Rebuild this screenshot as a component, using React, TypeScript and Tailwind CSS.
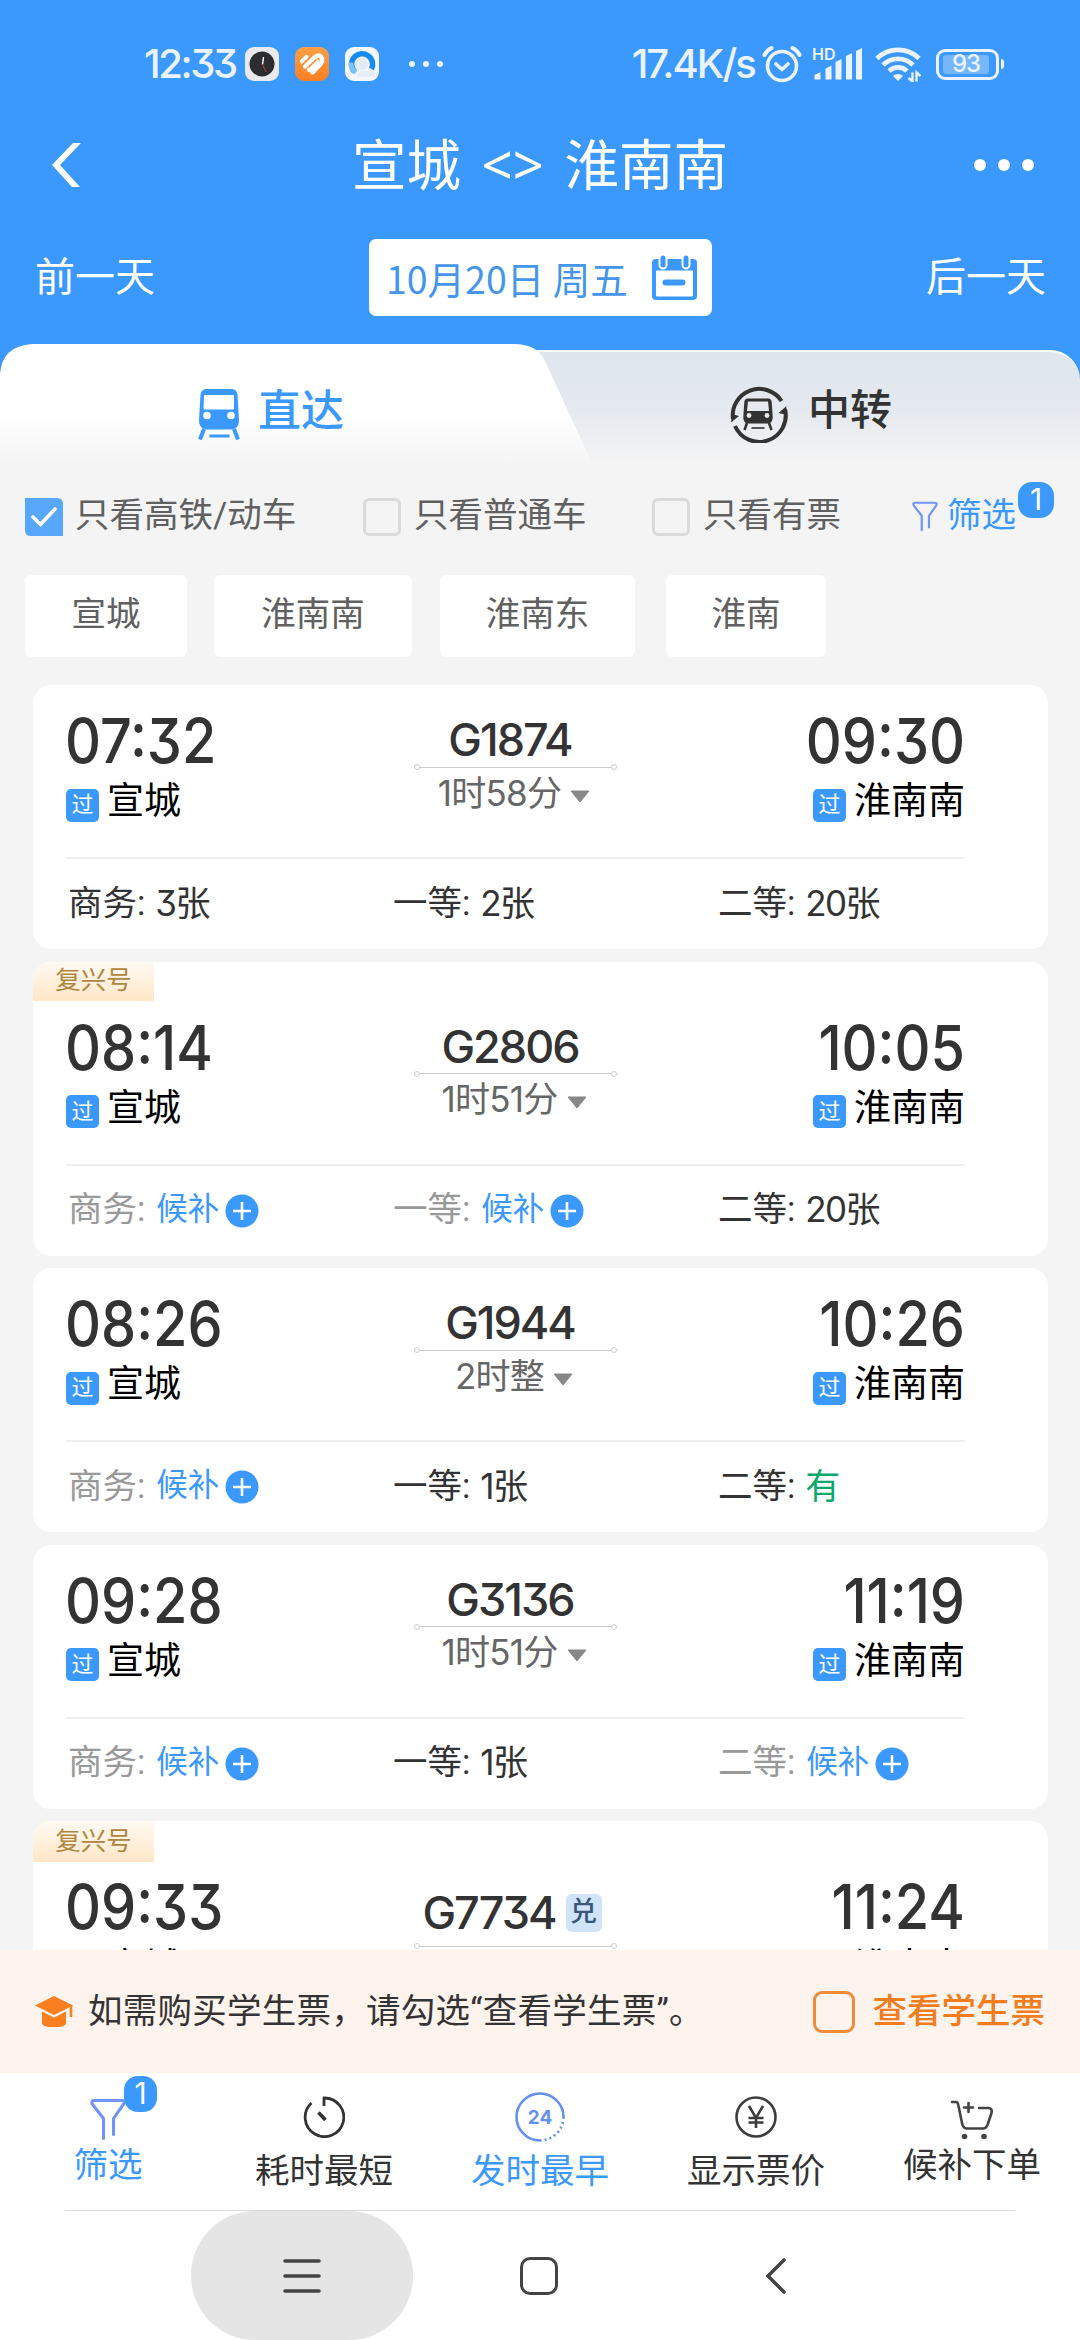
import clsx from "clsx";
import { ReactNode } from "react";

type TSeat = {
  label: string;
  // number of tickets left, "有" when plenty, null when only the waiting list is open
  left: string | null;
};

type TTrain = {
  number: string;
  depart: string;
  arrive: string;
  duration?: string;
  fuxing?: boolean;
  redeem?: boolean;
  seats: TSeat[];
};

const trains: TTrain[] = [
  {
    number: "G1874",
    depart: "07:32",
    arrive: "09:30",
    duration: "1时58分",
    seats: [
      { label: "商务", left: "3张" },
      { label: "一等", left: "2张" },
      { label: "二等", left: "20张" },
    ],
  },
  {
    number: "G2806",
    depart: "08:14",
    arrive: "10:05",
    duration: "1时51分",
    fuxing: true,
    seats: [
      { label: "商务", left: null },
      { label: "一等", left: null },
      { label: "二等", left: "20张" },
    ],
  },
  {
    number: "G1944",
    depart: "08:26",
    arrive: "10:26",
    duration: "2时整",
    seats: [
      { label: "商务", left: null },
      { label: "一等", left: "1张" },
      { label: "二等", left: "有" },
    ],
  },
  {
    number: "G3136",
    depart: "09:28",
    arrive: "11:19",
    duration: "1时51分",
    seats: [
      { label: "商务", left: null },
      { label: "一等", left: "1张" },
      { label: "二等", left: null },
    ],
  },
  {
    number: "G7734",
    depart: "09:33",
    arrive: "11:24",
    fuxing: true,
    redeem: true,
    seats: [],
  },
];

const StatusBar = () => (
  <div className="flex h-[128px] items-center pl-[144px] pr-[76px] text-[#eaf3ff]">
    <span className="w-[101px] font-['Inter','Noto_Sans_CJK_SC',sans-serif] text-[40px] leading-none font-medium tracking-[-2.4px] [font-feature-settings:'cv09']">
      12:33
    </span>
    <svg className="h-[34px] w-[34px]" viewBox="0 0 34 34">
      <rect width="34" height="34" rx="9" fill="#e9eaeb" />
      <circle cx="17" cy="17" r="12.5" fill="#2d2d2f" />
      <path d="M17.5 17.5 18.5 10" stroke="#fff" strokeWidth="1.4" />
      <path d="M17.5 17.5 21 25" stroke="#a8423a" strokeWidth="1" />
    </svg>
    <svg className="ml-4 h-[34px] w-[34px]" viewBox="0 0 34 34">
      <defs>
        <linearGradient id="fit" x1="0" y1="0" x2="0" y2="1">
          <stop offset="0" stopColor="#ff9f45" />
          <stop offset="1" stopColor="#f98022" />
        </linearGradient>
      </defs>
      <rect width="34" height="34" rx="9" fill="url(#fit)" />
      <path
        d="M7 14.500 11.500 10M10 19.500l10-9.500q4-3 6 0M17.500 25.500l8-8.500q3-4 .500-7M14 23l8-8.500"
        fill="none"
        stroke="#fff"
        strokeWidth="4.400"
        strokeLinecap="round"
      />
      <path d="m7.500 17.500 9.500-9.500M13.500 20.500l8-8" stroke="#fb8c31" strokeWidth="1.400" />
    </svg>
    <svg className="ml-4 h-[34px] w-[34px]" viewBox="0 0 34 34">
      <rect width="34" height="34" rx="9" fill="#f4f8fd" />
      <path d="M9.500 24.500A10.500 10.500 0 1 1 26.500 22" fill="none" stroke="#188cf0" strokeWidth="5.500" />
      <path d="M6 15.500a11 11 0 0 0 5 10" fill="none" stroke="#7cc2f8" strokeWidth="5" />
      <circle cx="16.500" cy="17" r="6.500" fill="#e3ebf8" />
      <path d="M11 30c2-5 6-7 11-6 4-2 8 0 8 6z" fill="#e6eef8" />
    </svg>
    <div className="ml-[30px] flex gap-2">
      <i className="size-[6px] rounded-full bg-[#eaf3ff]" />
      <i className="size-[6px] rounded-full bg-[#eaf3ff]" />
      <i className="size-[6px] rounded-full bg-[#eaf3ff]" />
    </div>
    <span className="ml-auto font-['Inter',sans-serif] text-[40px] leading-none font-medium tracking-[-1.9px]">
      17.4K/s
    </span>
    <svg className="ml-[7px] h-[38px] w-[40px]" viewBox="0 0 40 38" fill="none" stroke="currentColor">
      <circle cx="20" cy="21" r="14.500" strokeWidth="3.600" />
      <path d="m14 19 6 5.500 6-5.500" strokeWidth="3.600" strokeLinecap="round" strokeLinejoin="round" />
      <path d="M2.500 10C4 6.500 6.500 4.500 9.500 3M37.500 10C36 6.500 33.500 4.500 30.500 3" strokeWidth="4" strokeLinecap="round" />
    </svg>
    <svg className="ml-[10px] h-[38px] w-[50px] overflow-visible" viewBox="0 0 50 38" fill="currentColor">
      <text x="0" y="15" fontSize="16" fontWeight="600" fontFamily="Inter">
        HD
      </text>
      <path d="M2.500 34.500v-4.500l6-3v7.500zM13.500 34.500v-11l6-3v14zM23.500 34.500V17l6-3v20.500zM34 34.500V11l6-3v26.500zM44 34.500V6l6-3v31.500z" />
    </svg>
    <svg className="ml-[13px] h-[36px] w-[46px]" viewBox="0 0 46 36" fill="none" stroke="currentColor">
      <path d="M2 12.500a30 30 0 0 1 42 0M8 19a21.500 21.500 0 0 1 30 0M14 25a13 13 0 0 1 18 0" strokeWidth="4.800" />
      <path d="m18 30 5 5 5-5a7 7 0 0 0-10 0z" fill="currentColor" strokeWidth="0" />
      <path d="M37.500 26.500v9l-4-3.500M41.500 35.500v-9l4 3.500" strokeWidth="2.400" />
    </svg>
    <div className="ml-[15px] flex h-[31px] w-[63px] items-center rounded-[9px] border-3 border-[#eaf3ff] px-1">
      <div className="flex h-[19px] w-[46px] items-center justify-center rounded-[3px] bg-[#75b6fd] font-['Inter',sans-serif] text-[24px] leading-none font-medium tracking-[-1px]">
        93
      </div>
    </div>
    <i className="ml-[2px] h-[10px] w-[3px] rounded-r bg-[#eaf3ff]" />
  </div>
);

const TrainIcon = () => (
  <svg className="h-[52px] w-[42px]" viewBox="0 0 42 52">
    <path
      d="M9 0h24c4 0 6 2 6.500 6L41 31c0 6-3 9.500-8 9.500H9C4 40.500 1 37 1 31L2.500 6C3 2 5 0 9 0z"
      fill="#3b98fc"
    />
    <path d="M7 7h28v12.500H6.500z" fill="#fff" stroke="#fff" strokeWidth="2" strokeLinejoin="round" />
    <circle cx="9" cy="26.500" r="3.800" fill="#fff" />
    <circle cx="33" cy="26.500" r="3.800" fill="#fff" />
    <path d="M6 40 2 50.500M36 40l4 10.500" stroke="#3b98fc" strokeWidth="4" />
    <path d="M11.500 47h20" stroke="#3b98fc" strokeWidth="3" />
  </svg>
);

const TransferIcon = () => (
  <svg className="h-[58px] w-[58px]" viewBox="0 0 58 58">
    <path d="M3 34A26.500 26.500 0 0 1 51.500 16" fill="none" stroke="#333" strokeWidth="4" />
    <path d="M55 24A26.500 26.500 0 0 1 5 41" fill="none" stroke="#333" strokeWidth="4" />
    <path d="M1 37.500 2 29l7 2zM56.500 21l-8 7 6.500 1.500z" fill="#333" />
    <path
      d="M18 13.500h20c2.500 0 3.500 1.500 3.700 3.500l1 15c0 4-1.700 6.500-5 6.500H18.300c-3.300 0-5-2.500-5-6.500l1-15c.200-2 1.200-3.500 3.700-3.500z"
      fill="#333"
    />
    <path d="M18 16.500h20l1 9.500H17z" fill="#e6eaef" />
    <circle cx="19" cy="30.500" r="2.400" fill="#e6eaef" />
    <circle cx="37" cy="30.500" r="2.400" fill="#e6eaef" />
    <path d="m17 38-2.500 7M39 38l2.500 7" stroke="#333" strokeWidth="2.600" />
    <path d="M21.500 43h13" stroke="#555" strokeWidth="2" />
  </svg>
);

const Funnel = ({ className }: { className: string }) => (
  <svg className={className} viewBox="0 0 36 42" fill="none" stroke="#6f93f8" strokeWidth="3" strokeLinecap="round">
    <path
      d="M13.500 40V20L3 6.500C1.200 4 1.500 2 4 2h28c2.500 0 2.800 2 1 4.500L23.500 20v16"
      strokeLinejoin="round"
    />
  </svg>
);

const Tabs = () => (
  <div className="flex bg-[#3b98fc]">
    {/* the left tab leans over the right one */}
    <div className="relative z-10 flex h-[119px] w-[592px] items-center gap-[18px] bg-linear-to-b from-white from-60% to-[#f5f5f5] pt-[23px] pl-[198px] [clip-path:path('M0_119V30Q2_2_32_0H516Q538_1_545_17L592_119Z')]">
      <TrainIcon />
      <span className="-mt-[8px] text-[43px] leading-none font-medium text-[#3b98fc]">直达</span>
    </div>
    <div className="-ml-[86px] mt-[6px] flex flex-1 items-center gap-[20px] rounded-tr-[30px] border-t-2 border-white bg-linear-to-b from-[#dfe6ee] via-[#e4e9ef] to-[#f4f4f4] pt-[12px] pl-[224px]">
      <TransferIcon />
      <span className="-mt-[6px] text-[42px] leading-none font-medium text-[#333]">中转</span>
    </div>
  </div>
);

const FilterCheck = ({ checked, children }: { checked?: boolean; children: ReactNode }) => (
  <label className="flex items-center">
    {checked ? (
      <svg className="mr-[12px] size-[38px]" viewBox="0 0 38 38">
        <path d="M0 0h32q6 0 6 6v32H6q-6 0-6-6z" fill="#57a7fb" />
        <path d="m8 19 7.500 7.500L30 11" fill="none" stroke="#fff" strokeWidth="3.600" strokeLinecap="round" />
      </svg>
    ) : (
      <i className="mr-[13px] size-[38px] rounded-[6px] border-3 border-[#dadada]" />
    )}
    <span className="-mt-[2px]">{children}</span>
  </label>
);

const Filters = () => (
  <div className="flex h-[107px] items-center pl-[25px] text-[34.5px] leading-none text-[#606060]">
    <div className="w-[338px]">
      <FilterCheck checked>只看高铁/动车</FilterCheck>
    </div>
    <div className="w-[289px]">
      <FilterCheck>只看普通车</FilterCheck>
    </div>
    <div className="w-[260px]">
      <FilterCheck>只看有票</FilterCheck>
    </div>
    <div className="relative flex items-center text-[#3b98fc]">
      <Funnel className="mr-[9px] h-[31px] w-[26px]" />
      <span className="-mt-[2px]">筛选</span>
      <span className="absolute -top-[18px] left-[106px] flex h-[36px] w-[36px] items-center justify-center rounded-[14px] bg-[#3b98fc] pb-[2px] font-['Inter',sans-serif] text-[30px] text-white">
        1
      </span>
    </div>
  </div>
);

const stations = [
  { name: "宣城", className: "w-[162px]" },
  { name: "淮南南", className: "ml-[27px] w-[198px]" },
  { name: "淮南东", className: "ml-[28px] w-[195px]" },
  { name: "淮南", className: "ml-[31px] w-[160px]" },
];

const StationChips = () => (
  <div className="flex pl-[25px] pt-[5px]">
    {stations.map((station) => (
      <button
        key={station.name}
        className={clsx(
          "h-[82px] rounded-[6px] bg-white pb-[4px] text-[34.5px] leading-none text-[#606060]",
          station.className
        )}
      >
        {station.name}
      </button>
    ))}
  </div>
);

const Time = ({ value, right }: { value: string; right?: boolean }) => (
  <div
    className={clsx(
      "flex h-[70px] scale-x-90 items-center font-['Inter',sans-serif] text-[62px] leading-none font-[530] text-[#333] [font-feature-settings:'cv09']",
      right ? "origin-right justify-end" : "origin-left -ml-[1px]"
    )}
  >
    {value}
  </div>
);

const Station = ({ name, right }: { name: string; right?: boolean }) => (
  <div className={clsx("mt-px flex h-[48px] items-center", right && "justify-end")}>
    <span className="mt-[8px] mr-[8px] flex h-[33px] w-[33px] items-center justify-center rounded-[5px] bg-[#3b98fc] text-[22px] leading-none text-white">
      过
    </span>
    <span className="mt-px text-[37px] leading-none text-black">{name}</span>
  </div>
);

const Seat = ({ seat }: { seat: TSeat }) => (
  <div className="flex items-center">
    <span className={clsx("mr-[10px]", seat.left ? "text-[#333]" : "text-[#999]")}>
      {seat.label}:
    </span>
    {seat.left ? (
      <span
        className={clsx(
          "font-['Inter','Noto_Sans_CJK_SC',sans-serif] text-[35px] tracking-[-1.6px] [font-feature-settings:'cv09']",
          seat.left === "有" ? "text-[#09a86b]" : "text-[#333]"
        )}
      >
        {seat.left}
      </span>
    ) : (
      <>
        <span className="ml-px text-[31.5px] text-[#3b98fc]">候补</span>
        <svg className="mt-[2px] ml-[6px] size-[34px]" viewBox="0 0 34 34">
          <circle cx="17" cy="17" r="16.500" fill="#3b98fc" />
          <path d="M17 8v18M8 17h18" stroke="#fff" strokeWidth="2.600" />
        </svg>
      </>
    )}
  </div>
);

const TrainCard = ({ train }: { train: TTrain }) => (
  <li className="relative shrink-0 overflow-hidden rounded-[18px] bg-white">
    {train.fuxing && (
      <span
        className={clsx(
          "absolute top-0 left-0 flex w-[121px] items-center justify-center bg-linear-to-b from-[#fffaf3] to-[#ffe6c6] text-[25.5px] leading-none text-[#b0853e]",
          train.redeem ? "h-[41px]" : "h-[39px]"
        )}
      >
        复兴号
      </span>
    )}
    <div
      className={clsx(
        "mr-[83px] ml-[33px] grid h-[174px] grid-cols-[1fr_203px_1fr] border-b-2 border-[#efefef]",
        train.fuxing && "mt-[30px]"
      )}
    >
      <div className="pt-[21px]">
        <Time value={train.depart} />
        <Station name="宣城" />
      </div>
      <div className="flex flex-col items-center">
        <div
          className={clsx(
            "flex items-center",
            train.redeem ? "mt-[37px] mb-[6px] h-[49px] pr-[7px]" : "mt-[31px] mb-px h-[47px] pr-[11px]"
          )}
        >
          <span className="font-['Inter',sans-serif] text-[45px] leading-none font-medium tracking-[-2px] text-[#333] [font-feature-settings:'cv09']">
            {train.number}
          </span>
          {train.redeem && (
            <span className="ml-[10px] flex h-[38px] w-[36px] items-center justify-center rounded-[6px] bg-[#cfe3fb] text-[27px] leading-none font-medium text-[#3c5578]">
              兑
            </span>
          )}
        </div>
        <div className="flex h-[6px] w-full items-center">
          <i className="size-[6px] rounded-full border border-[#ccc]" />
          <i className="h-px flex-1 bg-[#ccc]" />
          <i className="size-[6px] rounded-full border border-[#ccc]" />
        </div>
        {train.duration && (
          <div className="mt-[5px] flex h-[36px] items-center pr-[3px] font-['Inter','Noto_Sans_CJK_SC',sans-serif] text-[35px] leading-none tracking-[-0.7px] text-[#666]">
            {train.duration}
            <svg className="mt-[6px] ml-[9px] h-[13px] w-[20px]" viewBox="0 0 20 13">
              <path d="M1 1h18l-9 11z" fill="#888" stroke="#888" strokeLinejoin="round" />
            </svg>
          </div>
        )}
      </div>
      <div className="pt-[21px]">
        <Time value={train.arrive} right />
        <Station name="淮南南" right />
      </div>
    </div>
    <div className="grid h-[90px] grid-cols-[325px_325px_325px] items-center pb-[2px] pl-[35px] text-[34.5px] leading-none">
      {train.seats.map((seat) => (
        <Seat key={seat.label} seat={seat} />
      ))}
    </div>
  </li>
);

const StudentBanner = () => (
  <div className="flex h-[123px] items-center bg-[#fff3ee] pr-[35px] pl-[35px] text-[34.5px] leading-none">
    <svg className="mr-[14px] h-[32px] w-[39px]" viewBox="0 0 39 32" fill="#f97f20">
      <path d="M19 0 38 9.500 19 19 0 9.500z" />
      <path d="M7 15.500 19 21.500l12-6V28q-3 3-6 3H13q-3 0-6-3z" />
      <path d="M36 9.500V21" stroke="#f97f20" strokeWidth="2.600" />
    </svg>
    <span className="tracking-[0.25px] text-[#333]">如需购买学生票，请勾选“查看学生票”。</span>
    <i className="mr-[18px] ml-auto size-[42px] rounded-[9px] border-3 border-[#f08a3c]" />
    <span className="font-medium text-[#f27d1f]">查看学生票</span>
  </div>
);

const BottomTabs = () => (
  <div className="h-[138px] bg-white text-[34.5px] leading-none text-[#333]">
    <div className="grid h-[137px] grid-cols-5">
      <div className="relative flex flex-col items-center pt-[25px] text-[#3b98fc]">
        <Funnel className="h-[43px] w-[36px]" />
        <span className="mt-[7px]">筛选</span>
        <span className="absolute top-[3px] left-[124px] flex h-[36px] w-[33px] items-center justify-center rounded-[14px] bg-[#3b98fc] pb-[2px] font-['Inter',sans-serif] text-[30px] text-white">
          1
        </span>
      </div>
      <div className="flex flex-col items-center pt-[23px]">
        <svg className="size-[42px]" viewBox="0 0 42 42" fill="none" stroke="#333" strokeWidth="2.800">
          <path d="M21 10V2a19.300 19.300 0 1 1-12.500 5" />
          <path d="m15.500 16.500 7 7.500" strokeWidth="3.600" />
        </svg>
        <span className="mt-[16px]">耗时最短</span>
      </div>
      <div className="flex flex-col items-center pt-[19px] text-[#3b98fc]">
        <svg className="size-[50px]" viewBox="0 0 50 50" fill="none" stroke="#6690ee" strokeWidth="2.600">
          <path d="M25 48.500A23.500 23.500 0 1 1 48.500 25" />
          <path d="M48.500 25A23.500 23.500 0 0 1 25 48.500" strokeDasharray="2 3" />
          <text x="25" y="32" textAnchor="middle" fontSize="19" fontWeight="700" fontFamily="Inter" fill="#6690ee" stroke="none">
            24
          </text>
        </svg>
        <span className="mt-[12px]">发时最早</span>
      </div>
      <div className="flex flex-col items-center pt-[23px]">
        <svg className="size-[42px]" viewBox="0 0 42 42" fill="none" stroke="#3d3d3d" strokeWidth="2.600">
          <circle cx="21" cy="21" r="19.500" />
          <path d="m14 10 7 12 7-12M21 22v10M13.500 22h15M13.500 26.500h15" />
        </svg>
        <span className="mt-[16px]">显示票价</span>
      </div>
      <div className="flex flex-col items-center pt-[27px]">
        <svg className="h-[40px] w-[44px]" viewBox="0 0 44 40" fill="none" stroke="#444" strokeWidth="2.600" strokeLinecap="round">
          <path d="M2 2h4q2 0 2.500 4L12 23q1 5.500 5 5.500h16q3 0 4.500-3.500l4-12q1-5-3-5H29" strokeLinejoin="round" />
          <path d="M18.500 3v9M14 7.500h9" />
          <circle cx="14.500" cy="36.500" r="2.800" fill="#444" stroke="none" />
          <circle cx="34" cy="36.500" r="2.800" fill="#444" stroke="none" />
        </svg>
        <span className="mt-[8px]">候补下单</span>
      </div>
    </div>
    <div className="mx-[65px] h-px bg-[#dadada]" />
  </div>
);

const NavigationBar = () => (
  <div className="flex h-[129px] bg-white pl-[191px]">
    <div className="flex w-[222px] items-center justify-center rounded-[64px] bg-[#e5e5e5]">
      <svg className="h-[36px] w-[38px]" viewBox="0 0 38 36" stroke="#444" strokeWidth="3.600" strokeLinecap="round">
        <path d="M2 3h34M2 18h34M2 33h34" />
      </svg>
    </div>
    <div className="flex w-[252px] items-center justify-center">
      <i className="size-[38px] rounded-[10px] border-[3.5px] border-[#444]" />
    </div>
    <div className="flex w-[222px] items-center justify-center">
      <svg className="h-[36px] w-[20px]" viewBox="0 0 20 36" fill="none" stroke="#444" strokeWidth="3.600" strokeLinecap="round">
        <path d="M18 2 2 18l16 16" />
      </svg>
    </div>
  </div>
);

const App = () => {
  return (
    <main className="flex h-[2340px] w-[1080px] flex-col overflow-hidden bg-[#f4f4f4] font-['Roboto','Noto_Sans_CJK_SC',sans-serif]">
      <header className="h-[344px] shrink-0 bg-[#3b98fc] text-white">
        <StatusBar />
        <div className="flex h-[74px] items-center justify-between pr-[46px] pl-[52px]">
          <svg className="h-[44px] w-[54px]" viewBox="0 0 54 44">
            <path d="M21 0h8L8 22l20 22h-8L0 22z" fill="#fff" />
          </svg>
          <h1 className="text-[54.5px] leading-none">
            宣城 <span className="px-[7px] font-['Noto_Sans',sans-serif]">&lt;&gt;</span> 淮南南
          </h1>
          <div className="flex gap-3">
            <i className="size-[12px] rounded-full bg-white" />
            <i className="size-[12px] rounded-full bg-white" />
            <i className="size-[12px] rounded-full bg-white" />
          </div>
        </div>
        <div className="flex items-center justify-between pt-[37px] pr-[34px] pl-[35px] text-[40px] leading-none">
          <span>前一天</span>
          <div className="flex h-[77px] w-[343px] items-center justify-between rounded-[7px] bg-white pr-[15px] pl-[17px] text-[#4596ea]">
            <span className="font-['Noto_Sans_CJK_SC',sans-serif] text-[37.5px] whitespace-nowrap">10月20日 周五</span>
            <svg className="h-[46px] w-[45px]" viewBox="0 0 45 46">
              <path d="M4 4h37q4 0 4 4v33q0 4-4 4H4q-4 0-4-4V8q0-4 4-4z" fill="#3b98fc" />
              <path d="M4 15.500h37v25q0 1-1 1H5q-1 0-1-1z" fill="#fff" />
              <path d="M11 3v7M34 3v7" stroke="#fff" strokeWidth="9" strokeLinecap="round" />
              <path d="M11 3v7M34 3v7" stroke="#3b98fc" strokeWidth="5" strokeLinecap="round" />
              <path d="M13.500 27.500h17" stroke="#3b98fc" strokeWidth="6" strokeLinecap="round" />
            </svg>
          </div>
          <span>后一天</span>
        </div>
      </header>
      <Tabs />
      <Filters />
      <StationChips />
      <ul className="flex min-h-0 flex-1 flex-col gap-[12.5px] overflow-hidden pt-[28px] pr-[32px] pl-[33px]">
        {trains.map((train) => (
          <TrainCard key={train.number} train={train} />
        ))}
      </ul>
      <StudentBanner />
      <BottomTabs />
      <NavigationBar />
    </main>
  );
};

export default App;
